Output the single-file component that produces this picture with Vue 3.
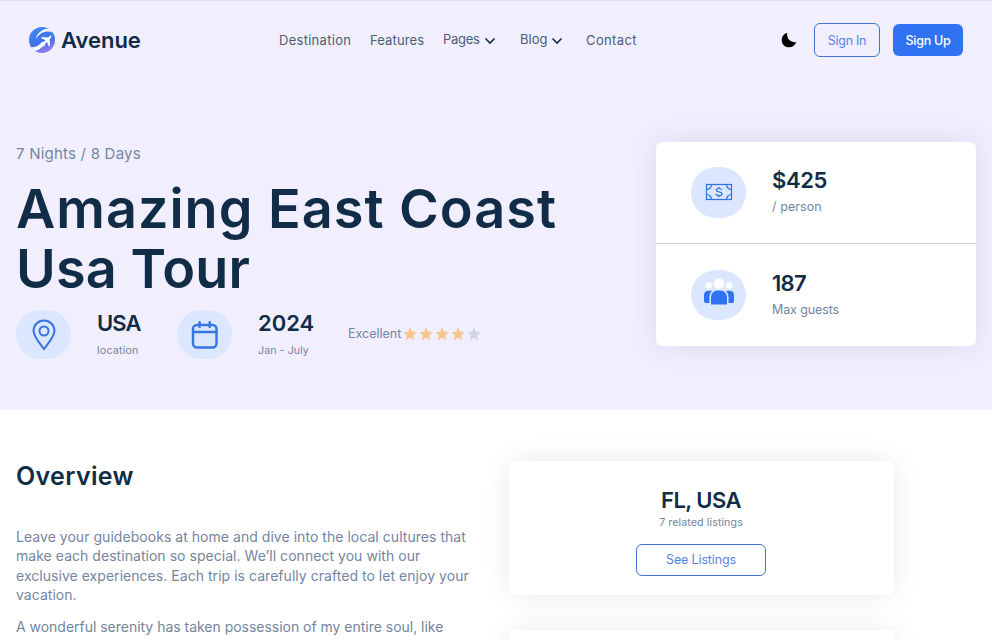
<script setup>
const stars = [true, true, true, true, false]
</script>

<template>
  <div class="page">
    <section class="hero">
      <header class="nav">
        <a class="logo">
          <svg class="logo-mark" viewBox="0 0 26 26">
            <defs>
              <linearGradient id="mark" x1="0.3" y1="0" x2="0.7" y2="1">
                <stop offset="0" stop-color="#4389f5" />
                <stop offset="0.55" stop-color="#3c72ea" />
                <stop offset="1" stop-color="#9a80ee" />
              </linearGradient>
              <clipPath id="disc"><circle cx="13" cy="13" r="13" /></clipPath>
            </defs>
            <g clip-path="url(#disc)">
              <rect width="26" height="26" fill="url(#mark)" />
              <path d="M6.800 12C7.500 6.500 13 2 20 1.200L24.500 6C19 2.800 11 4.700 6.800 12Z" fill="#fff" />
              <path d="M1 20.200C6 20.600 10 19 14 14.500L16.500 16.500C12.500 21.200 8.500 24.300 4.500 24Z" fill="#fff" />
              <path d="M22.600 8.600C22 8.300 20.900 8.900 19.300 10.400L12.800 9.900L11.900 10.900L16.500 13.300L14.200 15.600L12.200 15.400L11.500 16.200L13.900 17.400L14.900 19.700L15.700 19L15.600 17.100L18 14.900L19.900 19.600L20.900 18.700L20.700 12C22.300 10.400 22.900 9.300 22.600 8.600Z" fill="#fff" />
            </g>
          </svg>
          <span class="logo-text">Avenue</span>
        </a>
        <nav class="menu">
          <a class="wide">Destination</a>
          <a class="mid">Features</a>
          <a class="drop pages">Pages
            <svg viewBox="0 0 12 8"><path d="M1.500 1.500L6 6L10.500 1.500" /></svg>
          </a>
          <a class="drop">Blog
            <svg viewBox="0 0 12 8"><path d="M1.500 1.500L6 6L10.500 1.500" /></svg>
          </a>
          <a class="contact">Contact</a>
        </nav>
        <div class="actions">
          <svg class="moon" viewBox="0 0 16 16">
            <path d="M6.300 0.700C5.200 6 9.300 10.800 15.300 10.200C14 13.300 11.300 15.300 8 15.300C3.900 15.300 0.700 12.100 0.700 8.200C0.700 4.600 3 1.600 6.300 0.700Z" />
          </svg>
          <button class="btn outline sign-in">Sign In</button>
          <button class="btn solid">Sign Up</button>
        </div>
      </header>

      <div class="hero-body">
        <div class="intro">
          <p class="duration">7 Nights / 8 Days</p>
          <h1><span class="line-one">Amazing East Coast</span><br />Usa Tour</h1>
          <div class="facts">
            <div class="badge">
              <svg class="pin" viewBox="0 0 24 32">
                <path d="M12 30C9 26 1.500 17.500 1.500 11.800A10.500 10.300 0 0 1 22.500 11.800C22.500 17.500 15 26 12 30Z" />
                <circle cx="12" cy="12" r="4.500" />
              </svg>
            </div>
            <div class="fact">
              <strong class="usa">USA</strong>
              <small class="place">location</small>
            </div>
            <div class="badge">
              <svg class="calendar" viewBox="0 0 28 30">
                <rect x="2" y="5" width="23.500" height="22.500" rx="4" />
                <path d="M2 12H25.500M8.600 2.200V7M18.700 2.200V7" />
              </svg>
            </div>
            <div class="fact">
              <strong>2024</strong>
              <small class="months">Jan - July</small>
            </div>
            <div class="rating">
              <span>Excellent</span>
              <svg v-for="(on, i) in stars" :key="i" class="star" :class="{ off: !on }" viewBox="0 0 16 16">
                <path d="M8 1.200L10 5.700L14.800 6.100L11.100 9.400L12.200 14.200L8 11.700L3.800 14.200L4.900 9.400L1.200 6.100L6 5.700Z" />
              </svg>
            </div>
          </div>
        </div>

        <aside class="price-card">
          <div class="price-row">
            <div class="badge">
              <svg class="note" viewBox="0 0 28 18">
                <rect x="1.500" y="1.500" width="25" height="15" />
                <path d="M1.500 6.500A5 5 0 0 0 6.500 1.500M21.500 1.500A5 5 0 0 0 26.500 6.500M1.500 11.500A5 5 0 0 1 6.500 16.500M21.500 16.500A5 5 0 0 1 26.500 11.500" />
                <path d="M16.800 6.900C16.500 5.900 15.500 5.500 14 5.500C12.300 5.500 11.300 6.100 11.300 7.200C11.300 9.600 17 8.300 17 10.900C17 12 15.800 12.700 14.100 12.700C12.300 12.700 11.200 12 11.100 10.900M14 3.900V5.500M14 12.700V14.200" />
              </svg>
            </div>
            <div class="fact">
              <strong class="amount">$425</strong>
              <span>/ person</span>
            </div>
          </div>
          <div class="price-row second">
            <div class="badge guests-badge">
              <svg class="guests" viewBox="0 0 32 28">
                <circle cx="16" cy="5.500" r="5.200" fill="#fff" />
                <circle cx="5.700" cy="7.500" r="3.300" fill="#fff" />
                <circle cx="26.300" cy="7.500" r="3.300" fill="#fff" />
                <path d="M8 26.500V20C8 15.300 11 12.500 14.500 12.500H17.500C21 12.500 24 15.300 24 20V26.500Z" />
                <path d="M1 23V17C1 14.500 2.800 12.700 5 12.700H9C7.300 14.500 6.500 17 6.500 19.500V25H3C1.700 25 1 24.200 1 23ZM31 23V17C31 14.500 29.200 12.700 27 12.700H23C24.700 14.500 25.500 17 25.500 19.500V25H29C30.300 25 31 24.200 31 23Z" />
              </svg>
            </div>
            <div class="fact">
              <strong class="count">187</strong>
              <span class="max">Max guests</span>
            </div>
          </div>
        </aside>
      </div>
    </section>

    <main class="content">
      <article class="overview">
        <h2>Overview</h2>
        <p>Leave your guidebooks at home and dive into the local cultures that<br />make each destination so special. We’ll connect you with our<br />exclusive experiences. Each trip is carefully crafted to let enjoy your<br />vacation.</p>
        <p class="serenity">A wonderful serenity has taken possession of my entire soul, like</p>
      </article>
      <div class="side">
        <section class="listing">
          <h3>FL, USA</h3>
          <small>7 related listings</small>
          <button class="btn outline see">See Listings</button>
        </section>
        <section class="listing next"></section>
      </div>
    </main>
  </div>
</template>

<style>
body {
  margin: 0;
  overflow: hidden;
}
</style>

<style scoped>
* {
  box-sizing: border-box;
}
.page {
  height: 640px;
  overflow: hidden;
  background: #fff;
  color: #7485a0;
  font-family: Inter, "Liberation Sans", sans-serif;
  font-weight: 400;
}
h1, h2, h3, p {
  margin: 0;
}
svg {
  display: block;
  flex: none;
}
.hero {
  height: 410px;
  background: #f1effe;
  border-top: 1px solid #dfdde8;
}
.nav {
  display: grid;
  grid-template-columns: 250px 1fr auto;
  align-items: center;
  height: 78px;
  padding: 0 29px;
}
.logo {
  display: flex;
  align-items: center;
  gap: 6px;
}
.logo-mark {
  width: 26px;
  height: 26px;
}
.logo-text {
  color: #102c46;
  font-size: 22px;
  font-weight: 600;
  line-height: 26px;
  letter-spacing: -0.02px;
}
.menu {
  display: grid;
  grid-template-columns: 91px 73px 77px 66px auto;
  color: #4c5d77;
  font-size: 13px;
  line-height: 20px;
}
.wide {
  letter-spacing: 0.28px;
}
.mid {
  letter-spacing: 0.12px;
}
.contact {
  letter-spacing: 0.38px;
}
.drop {
  display: flex;
  gap: 4px;
  margin-top: -1px;
}
.drop svg {
  width: 12px;
  height: 8px;
  margin-top: 8px;
  fill: none;
  stroke: #102c46;
  stroke-width: 1.6;
}
.pages {
  letter-spacing: -0.3px;
}
.actions {
  display: flex;
  align-items: center;
}
.moon {
  width: 16px;
  height: 16px;
  margin-right: 17px;
}
.btn {
  display: flex;
  align-items: center;
  justify-content: center;
  padding: 0;
  border-radius: 6px;
  font-family: inherit;
  font-size: 12.5px;
  line-height: 20px;
}
.outline {
  background: transparent;
  border: 1px solid #4274cf;
  color: #5584e2;
  font-weight: 400;
}
.sign-in {
  width: 66px;
  height: 34px;
  margin-right: 13px;
  padding-top: 2px;
  letter-spacing: -0.3px;
}
.solid {
  width: 70px;
  height: 32px;
  padding-top: 2px;
  border: 0;
  background: #2f73f2;
  color: #fff;
  font-weight: 500;
  letter-spacing: -0.25px;
}
.hero-body {
  display: flex;
  justify-content: space-between;
  padding: 63px 16px 0;
}
.duration {
  font-size: 15px;
  line-height: 24px;
  letter-spacing: 0.22px;
}
h1 {
  margin-top: 13px;
  color: #102c46;
  font-size: 54px;
  font-weight: 600;
  line-height: 60px;
  letter-spacing: 0.15px;
}
.line-one {
  letter-spacing: 1px;
}
.facts {
  display: grid;
  grid-template-columns: 81px 80px 81px 90px auto;
  margin-top: 11px;
}
.badge {
  display: flex;
  align-items: center;
  justify-content: center;
  width: 55px;
  height: 49px;
  border-radius: 25px;
  background: #dae7ff;
}
.pin, .calendar {
  fill: none;
  stroke: #3973e2;
  stroke-width: 2;
}
.pin {
  width: 24px;
  height: 32px;
}
.calendar {
  width: 28px;
  height: 30px;
  stroke-width: 2.4;
  stroke-linecap: round;
}
.fact {
  display: flex;
  flex-direction: column;
  margin-top: -1px;
}
.fact strong {
  color: #102c46;
  font-size: 22px;
  font-weight: 600;
  line-height: 28px;
}
.fact .usa {
  letter-spacing: -0.89px;
}
.fact small {
  margin-top: 6px;
  font-size: 10.7px;
  line-height: 16px;
}
.place {
  letter-spacing: 0.2px;
}
.months {
  letter-spacing: 0.05px;
}
.rating {
  display: flex;
  align-items: center;
  height: 48px;
  font-size: 12.5px;
  line-height: 20px;
}
.rating span {
  width: 54px;
}
.star {
  width: 16px;
  height: 16px;
  fill: #f8c78f;
}
.star.off {
  fill: #ccd6e0;
}
.price-card {
  width: 320px;
  height: 204px;
  border-radius: 6px;
  background: #fff;
  box-shadow: 0 0 28px rgba(60, 50, 110, 0.12);
}
.price-row {
  display: flex;
  gap: 26px;
  height: 101px;
  padding: 25px 35px 0;
}
.price-row.second {
  height: 103px;
  padding-top: 26px;
  border-top: 1px solid #c9d5d8;
}
.price-row .badge {
  height: 51px;
}
.price-row .note {
  margin-top: -1px;
}
.price-row .guests-badge {
  height: 50px;
  align-items: flex-start;
  padding-top: 8px;
}
.price-row .fact span {
  margin-top: 4px;
  font-size: 12.5px;
  line-height: 18px;
  letter-spacing: 0.08px;
}
.price-row .fact .max {
  letter-spacing: -0.12px;
}
.fact .amount {
  letter-spacing: -0.4px;
}
.fact .count {
  letter-spacing: -0.69px;
}
.note {
  width: 28px;
  height: 18px;
  fill: none;
  stroke: #3470e2;
  stroke-width: 1.2;
}
.guests {
  width: 32px;
  height: 28px;
  fill: #2f73f2;
}
.content {
  display: grid;
  grid-template-columns: 493px 385px;
  padding: 50px 16px 0;
}
h2 {
  color: #102c46;
  font-size: 25px;
  font-weight: 600;
  line-height: 32px;
  letter-spacing: 0.35px;
}
.overview p {
  margin-top: 35px;
  font-size: 14px;
  line-height: 19.4px;
  letter-spacing: 0.04px;
  white-space: nowrap;
}
.overview .serenity {
  margin-top: 12.4px;
  letter-spacing: -0.02px;
}
.listing {
  display: flex;
  flex-direction: column;
  align-items: center;
  height: 134px;
  margin-top: 1px;
  padding: 25px 1px 0 0;
  border-radius: 6px;
  background: #fff;
  box-shadow: 0 0 28px rgba(0, 0, 0, 0.09);
}
h3 {
  color: #102c46;
  font-size: 22px;
  font-weight: 600;
  line-height: 28px;
  letter-spacing: -0.55px;
}
.listing small {
  margin-top: 1px;
  font-size: 10.7px;
  line-height: 16px;
  letter-spacing: 0.08px;
}
.see {
  width: 130px;
  height: 32px;
  margin-top: 13px;
  letter-spacing: -0.15px;
}
.listing.next {
  margin-top: 35px;
  border-radius: 0;
}
</style>
